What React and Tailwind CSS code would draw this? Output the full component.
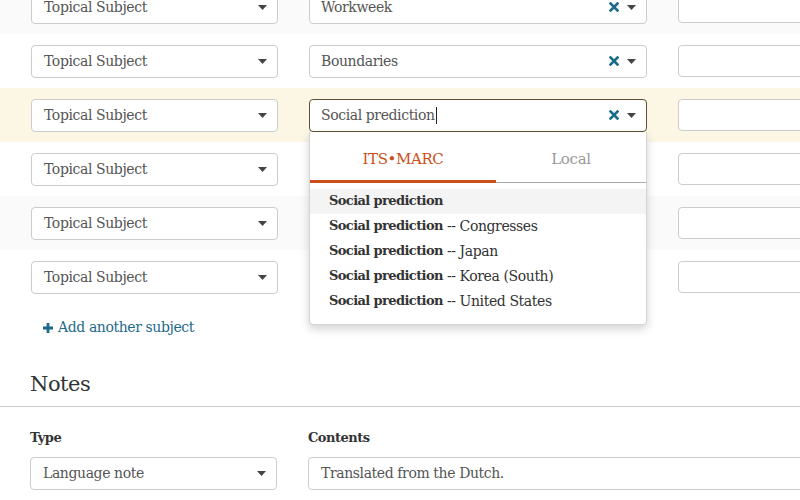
import React from "react";

const Caret = () => (
  <svg width="9" height="5" viewBox="0 0 9 5" className="shrink-0">
    <path d="M0 0 L9 0 L4.5 5 Z" fill="#444" />
  </svg>
);

const Clear = () => (
  <svg width="10" height="10" viewBox="0 0 10 10" className="shrink-0">
    <path d="M1.5 1.5 L8.5 8.5 M8.5 1.5 L1.5 8.5" stroke="#1b6b8b" strokeWidth="2.6" strokeLinecap="square" />
  </svg>
);

function Select({ value, width = "w-[247px]" }) {
  return (
    <div className={`${width} h-[33px] shrink-0 bg-white border border-[#ccc] rounded-[4px] flex items-center pl-[12px] pr-[10px]`}>
      <span className="flex-1 text-[14px] text-[#555] tracking-[-0.4px]">{value}</span>
      <Caret />
    </div>
  );
}

function Lookup({ value, focused }) {
  return (
    <div
      className={`w-[338px] h-[33px] shrink-0 bg-white border rounded-[4px] flex items-center pl-[11px] pr-[10px] ${
        focused ? "border-[#5e4f36]" : "border-[#ccc]"
      }`}
    >
      <span className="flex-1 flex items-center text-[14px] text-[#555] tracking-[-0.4px]">
        {value}
        {focused && <span className="inline-block w-px h-[17px] bg-[#222] ml-px" />}
      </span>
      <div className="flex items-center gap-[8px]">
        <Clear />
        <Caret />
      </div>
    </div>
  );
}

function Row({ bg, value, focused, children }) {
  return (
    <div className={`h-[54px] flex items-center pl-[31px] ${bg}`}>
      <Select value="Topical Subject" />
      <div className="ml-[31px] relative">
        <Lookup value={value} focused={focused} />
        {children}
      </div>
      <div className="ml-[31px] w-[200px] h-[32px] shrink-0 bg-white border border-[#ccc] rounded-[4px]" />
    </div>
  );
}

const results = ["Congresses", "Japan", "Korea (South)", "United States"];

function Dropdown() {
  return (
    <div className="absolute left-0 top-full w-[338px] z-10 bg-white border border-[#d4d4d4] border-t-0 rounded-b-[4px] shadow-[0_4px_10px_rgba(0,0,0,0.18)] pb-[10px]">
      <div className="flex h-[51px] border-b border-[#aaa]">
        <div className="w-[186px] flex items-center justify-center pt-[6px] relative text-[15px] text-[#cc4f1b] tracking-[-0.4px]">
          ITS•MARC
          <div className="absolute left-0 right-0 bottom-[-1px] h-[3px] bg-[#cc4f1b]" />
        </div>
        <div className="flex-1 flex items-center justify-center pt-[6px] text-[15px] text-[#999] tracking-[-0.3px]">
          Local
        </div>
      </div>
      <div className="pt-[6px]">
        <div className="h-[25px] flex items-center pl-[19px] bg-[#f4f4f4] text-[13px] text-[#333] font-bold tracking-[-0.6px]">
          Social prediction
        </div>
        {results.map((r) => (
          <div key={r} className="h-[25px] flex items-center pl-[19px] text-[#333]">
            <span className="font-bold text-[13px] tracking-[-0.6px]">Social prediction</span>
            <span className="whitespace-pre text-[14px] tracking-[-0.4px]"> -- {r}</span>
          </div>
        ))}
      </div>
    </div>
  );
}

export default function App() {
  return (
    <div className="w-[800px] h-[500px] overflow-hidden bg-white font-['DejaVu_Serif',serif]">
      <div className="mt-[-20px]">
        <Row bg="bg-[#fafafa]" value="Workweek" />
        <Row bg="bg-white" value="Boundaries" />
        <Row bg="bg-[#fcf7e4]" value="Social prediction" focused>
          <Dropdown />
        </Row>
        <Row bg="bg-white" value="" />
        <Row bg="bg-[#fafafa]" value="" />
        <Row bg="bg-white" value="" />
      </div>
      <div className="pl-[43px] pt-[13px] flex items-center gap-[5px] text-[14px] text-[#1d6a8a] tracking-[-0.4px]">
        <svg width="10" height="10" viewBox="0 0 10 10">
          <path d="M5 0 V10 M0 5 H10" stroke="#1d6a8a" strokeWidth="2.8" />
        </svg>
        Add another subject
      </div>
      <div className="pl-[30px] pt-[33px] pb-[9px] text-[21px] text-[#333] tracking-[-0.5px] leading-[26px]">
        Notes
      </div>
      <div className="border-t border-[#ccc]" />
      <div className="flex pl-[30px] pt-[22px]">
        <div className="w-[247px] shrink-0">
          <div className="text-[13px] font-bold text-[#333] tracking-[-0.5px] h-[18px] leading-[18px]">Type</div>
          <div className="mt-[10px]">
            <Select value="Language note" />
          </div>
        </div>
        <div className="ml-[31px] flex-1">
          <div className="text-[13px] font-bold text-[#333] tracking-[-0.5px] h-[18px] leading-[18px]">Contents</div>
          <div className="mt-[10px] w-[600px] h-[33px] bg-white border border-[#ccc] rounded-[4px] flex items-center pl-[12px] text-[14px] text-[#555] tracking-[-0.4px]">
            Translated from the Dutch.
          </div>
        </div>
      </div>
    </div>
  );
}
